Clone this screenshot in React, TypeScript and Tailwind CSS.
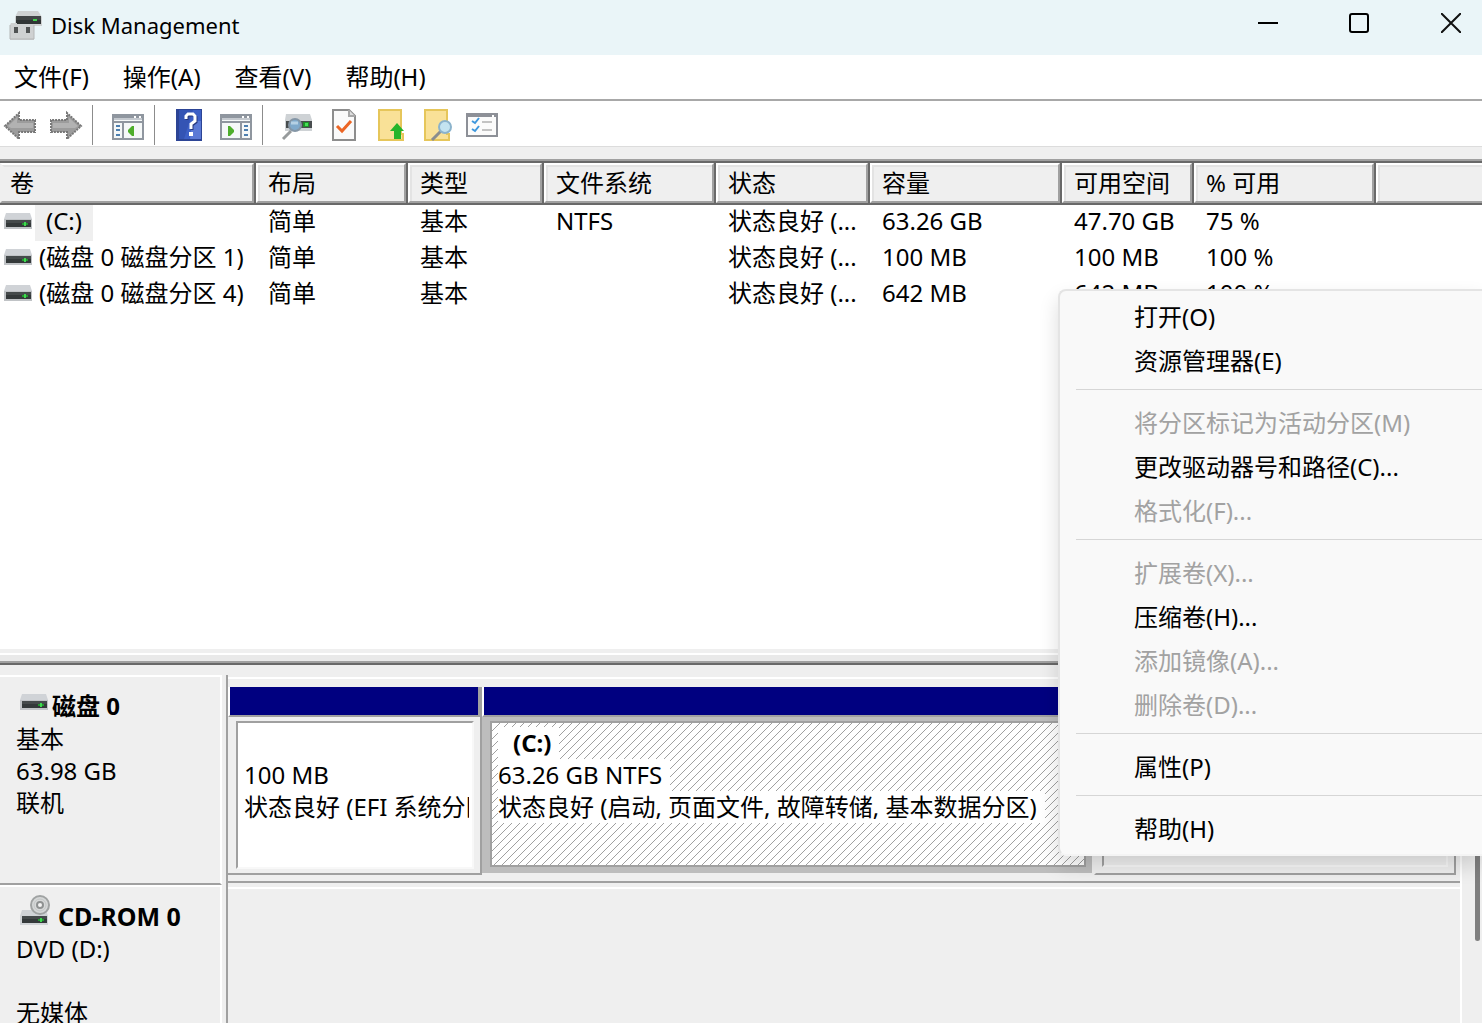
import React from "react";

const FONT = "font-['Noto_Sans','Noto_Sans_CJK_SC',sans-serif]";

function DriveIcon({ className = "" }: { className?: string }) {
  return (
    <svg className={className} width="28" height="16" viewBox="0 0 28 16" aria-hidden="true">
      <path d="M2 0h24l2 6v10H0V6z" fill="#d0d3d7" />
      <path d="M0 6h28v10H0z" fill="#c0c3c6" />
      <rect x="2" y="7" width="25" height="7" fill="#454a4b" />
      <rect x="2" y="10" width="25" height="4" fill="#34393a" />
      <rect x="18" y="10" width="6" height="2" fill="#239a30" />
      <rect x="20" y="9" width="2" height="4" fill="#3fd94f" />
    </svg>
  );
}

function CdIcon() {
  return (
    <svg width="30" height="32" viewBox="0 0 30 32" aria-hidden="true">
      <path d="M2 15h24l2 6v9H0v-9z" fill="#d0d3d6" />
      <circle cx="20" cy="10" r="9" fill="#d6d8d8" stroke="#a0a3a3" strokeWidth="2" />
      <circle cx="20" cy="10" r="6" fill="none" stroke="#c4c7c7" />
      <circle cx="20" cy="10" r="3" fill="#f4f4f4" stroke="#8f9292" strokeWidth="2" />
      <rect x="2" y="21" width="25" height="7" fill="#454a4b" />
      <rect x="2" y="24" width="25" height="4" fill="#34393a" />
      <rect x="18" y="24" width="6" height="2" fill="#239a30" />
      <rect x="20" y="23" width="2" height="4" fill="#3fd94f" />
    </svg>
  );
}

function AppIcon() {
  return (
    <svg width="34" height="32" viewBox="0 0 34 32" aria-hidden="true">
      <path d="M10 2h20l4 6v9H7V8z" fill="#cfd2d3" />
      <rect x="8" y="7" width="25" height="8" fill="#414546" />
      <rect x="8" y="11" width="25" height="4" fill="#303435" />
      <rect x="25" y="10" width="4" height="2" fill="#3fd04c" />
      <path d="M3 14h6v2h17v15H2V16z" fill="#cfd1d2" />
      <path d="M2 16v14h24V16" fill="none" stroke="#b4b6b7" strokeWidth="1" />
      <rect x="6" y="18" width="4" height="6" fill="#505354" />
      <rect x="18" y="18" width="4" height="6" fill="#505354" />
    </svg>
  );
}

function ArrowIcon({ flip = false }: { flip?: boolean }) {
  return (
    <svg width="34" height="32" viewBox="0 0 34 32" className={flip ? "-scale-x-100" : ""} aria-hidden="true">
      <path d="M2 17 16 4v7h16v12H16v7z" fill="#9c9c9c" />
      <path d="M5 17 14 9v5h16v5H8z" fill="#b2b2b2" />
      <path d="M2 17 16 4v7h16v12H16v7z" fill="none" stroke="#777" strokeWidth="2" strokeDasharray="2 1" />
    </svg>
  );
}

function PaneIcon({ right = false }: { right?: boolean }) {
  return (
    <svg width="32" height="26" viewBox="0 0 32 26" aria-hidden="true">
      <rect x="1" y="1" width="30" height="24" fill="#f5f8f8" stroke="#8f969f" strokeWidth="2" />
      <path d="M2 3h28" stroke="#8f969f" strokeWidth="2" />
      <path d="M2 5h28" stroke="#c4c9cf" strokeWidth="2" />
      <path d="M2 8h28" stroke="#8f969f" strokeWidth="2" />
      <path d="M22 3h2M27 3h2" stroke="#fff" strokeWidth="2" />
      {right ? (
        <g>
          <path d="M21 8v17" stroke="#8f969f" strokeWidth="2" />
          <path d="M24 12h4M24 16h4M24 21h4" stroke="#4c7fb0" strokeWidth="2" />
          <path d="M8 12v10h2l4-4v-2l-4-4z" fill="#4eae2c" />
        </g>
      ) : (
        <g>
          <path d="M11 8v17" stroke="#8f969f" strokeWidth="2" />
          <path d="M4 12h4M4 16h4M4 21h4" stroke="#4c7fb0" strokeWidth="2" />
          <path d="M22 12v10h-2l-4-4v-2l4-4z" fill="#4eae2c" />
        </g>
      )}
    </svg>
  );
}

function HelpIcon() {
  return (
    <svg width="26" height="32" viewBox="0 0 26 32" aria-hidden="true">
      <rect width="26" height="32" fill="#2c4495" />
      <rect x="3" y="1" width="22" height="29" fill="#3d60c6" />
      <path d="M3 1h14L8 30H3z" fill="#3454b4" />
      <path d="M16 12h9v18H14z" fill="#6f8be0" opacity=".6" />
      <path d="M11 11V8l2-2h5l2 2v5l-4 3v5" fill="none" stroke="#26377c" strokeWidth="3" />
      <path d="M10 10V7l2-2h5l2 2v5l-4 3v5" fill="none" stroke="#fff" strokeWidth="3" />
      <rect x="13" y="23" width="4" height="4" fill="#fff" />
    </svg>
  );
}

function DriveSearchIcon() {
  return (
    <svg width="32" height="28" viewBox="0 0 32 28" aria-hidden="true">
      <path d="M5 1h24l2 6v11H4V7z" fill="#ced2d5" />
      <rect x="5" y="8" width="26" height="7" fill="#484d4e" />
      <rect x="22" y="9" width="6" height="5" fill="#1f8f2a" />
      <rect x="24" y="10" width="3" height="3" fill="#44e055" />
      <path d="M10 18 2 26" stroke="#979b9c" strokeWidth="3" />
      <circle cx="14" cy="12" r="6" fill="#7fa9cb" stroke="#8496a6" strokeWidth="2" />
      <path d="M10 10h7" stroke="#b5d0e4" strokeWidth="3" />
    </svg>
  );
}

function CheckPageIcon() {
  return (
    <svg width="24" height="32" viewBox="0 0 24 32" aria-hidden="true">
      <path d="M1 1h16l6 6v24H1z" fill="#fafafa" stroke="#8d8d8d" strokeWidth="2" />
      <path d="M17 1v6h6" fill="#ddd" stroke="#a8a8a8" strokeWidth="2" />
      <path d="m5 17 5 5 9-10" fill="none" stroke="#ec6524" strokeWidth="3" />
    </svg>
  );
}

function FolderUpIcon() {
  return (
    <svg width="28" height="32" viewBox="0 0 28 32" aria-hidden="true">
      <path d="M1 1h22v24h2v6H1z" fill="#f9e197" stroke="#e6c65a" strokeWidth="2" />
      <path d="M19 14 26 22h-3v8h-7v-8h-4z" fill="#26b52a" />
    </svg>
  );
}

function FolderSearchIcon() {
  return (
    <svg width="30" height="32" viewBox="0 0 30 32" aria-hidden="true">
      <path d="M1 1h22v24h2v6H1z" fill="#f9e197" stroke="#e6c65a" strokeWidth="2" />
      <path d="M17 22 8 31" stroke="#8a8d8e" strokeWidth="3" />
      <circle cx="21" cy="18" r="6" fill="#c3e3f0" stroke="#8bb3cc" strokeWidth="2" />
    </svg>
  );
}

function ListIcon() {
  return (
    <svg width="32" height="24" viewBox="0 0 32 24" aria-hidden="true">
      <rect x="1" y="1" width="30" height="22" fill="#fbfbfb" stroke="#8d9097" strokeWidth="2" />
      <path d="M2 3h28" stroke="#8d9097" strokeWidth="2" />
      <path d="M26 3h2" stroke="#fff" strokeWidth="2" />
      <path d="m6 8 3 2 4-5M6 16l3 2 4-5" fill="none" stroke="#3d97dd" strokeWidth="2" />
      <path d="M16 9h10M16 17h10" stroke="#c3c3c3" strokeWidth="2" />
    </svg>
  );
}

function ToolButton({ label, className, children }: { label: string; className: string; children: React.ReactNode }) {
  return (
    <button type="button" aria-label={label} className={`flex shrink-0 items-center justify-center ${className}`}>
      {children}
    </button>
  );
}

function Separator({ className }: { className: string }) {
  return <div className={`h-10 w-px shrink-0 bg-[#8c8c8c] ${className}`} />;
}

const columns = [
  { label: "卷", width: "w-[256px]", pad: "pl-[6px]" },
  { label: "布局", width: "w-[152px]", pad: "pl-2" },
  { label: "类型", width: "w-[136px]", pad: "pl-2" },
  { label: "文件系统", width: "w-[172px]", pad: "pl-2" },
  { label: "状态", width: "w-[154px]", pad: "pl-2" },
  { label: "容量", width: "w-[192px]", pad: "pl-2" },
  { label: "可用空间", width: "w-[132px]", pad: "pl-2" },
  { label: "% 可用", width: "w-[182px]", pad: "pl-2" },
  { label: "", width: "", pad: "pl-2" },
];

const volumes = [
  { name: "(C:)", selected: true, cells: ["简单", "基本", "NTFS", "状态良好 (...", "63.26 GB", "47.70 GB", "75 %"] },
  { name: "(磁盘 0 磁盘分区 1)", selected: false, cells: ["简单", "基本", "", "状态良好 (...", "100 MB", "100 MB", "100 %"] },
  { name: "(磁盘 0 磁盘分区 4)", selected: false, cells: ["简单", "基本", "", "状态良好 (...", "642 MB", "642 MB", "100 %"] },
];

function VolumeTable() {
  return (
    <table className="w-full table-fixed border-collapse">
      <thead>
        <tr>
          {columns.map((c, i) => {
            const last = i === columns.length - 1;
            return (
              <th key={i} scope="col" className={`p-0 text-left font-normal ${c.width}`}>
                <div className={`h-[42px] border-b-2 border-[#696969] ${last ? "" : "border-r-2"}`}>
                  <div
                    className={`h-10 border-t-2 border-b-2 border-l-2 border-t-white border-r-[#a0a0a0] border-b-[#a0a0a0] bg-[#efefef] ${
                      last ? "" : "border-r-2"
                    } ${i === 0 ? "border-l-[#efefef]" : "border-l-white"}`}
                  >
                    <div className={`h-9 border-t-2 border-l-2 border-t-[#e3e3e3] leading-8 whitespace-nowrap ${c.pad} ${i === 0 ? "border-l-[#efefef]" : "border-l-[#e3e3e3]"}`}>
                      {c.label}
                    </div>
                  </div>
                </div>
              </th>
            );
          })}
        </tr>
      </thead>
      <tbody>
        {volumes.map((v) => (
          <tr key={v.name} className="h-9 align-top">
            <td className="p-0">
              <div className="flex h-9 items-start">
                <DriveIcon className="mt-2 ml-1 shrink-0" />
                <span className={v.selected ? "ml-[3px] h-9 bg-[#efefef] px-[11px] leading-8" : "ml-[7px] leading-8 whitespace-nowrap"}>{v.name}</span>
              </div>
            </td>
            {v.cells.map((text, i) => (
              <td key={i} className="p-0 pl-3 leading-8 whitespace-nowrap">
                {text}
              </td>
            ))}
            <td />
          </tr>
        ))}
      </tbody>
    </table>
  );
}

type Entry = { label: string; disabled?: boolean };

const menuGroups: Entry[][] = [
  [{ label: "打开(O)" }, { label: "资源管理器(E)" }],
  [{ label: "将分区标记为活动分区(M)", disabled: true }, { label: "更改驱动器号和路径(C)..." }, { label: "格式化(F)...", disabled: true }],
  [
    { label: "扩展卷(X)...", disabled: true },
    { label: "压缩卷(H)..." },
    { label: "添加镜像(A)...", disabled: true },
    { label: "删除卷(D)...", disabled: true },
  ],
  [{ label: "属性(P)" }],
  [{ label: "帮助(H)" }],
];

function ContextMenu() {
  return (
    <div
      role="menu"
      className="absolute top-[289px] right-0 left-[1058px] rounded-l-lg border-2 border-r-0 border-[#e4e4e4] border-b-[#f4f4f4] bg-[#f9f9f9] pt-1 shadow-[0_10px_20px_rgba(0,0,0,0.14)]"
    >
      {menuGroups.map((group, i) => (
        <div key={i} className={`ml-4 pb-[6px] last:pb-[3px] ${i > 0 ? "border-t border-[#d6d6d6] pt-[11px]" : ""}`}>
          {group.map((e) => (
            <button
              key={e.label}
              type="button"
              role="menuitem"
              disabled={e.disabled}
              className="block h-11 w-full pl-[58px] text-left leading-10 whitespace-nowrap text-black disabled:text-[#a2a2a2]"
            >
              {e.label}
            </button>
          ))}
        </div>
      ))}
    </div>
  );
}

function DiskMap() {
  return (
    <section className="flex min-h-0 flex-1 bg-[#efefef]">
      <div className="min-w-0 flex-1">
        <div className="flex h-[210px]">
          <div className="w-[222px] shrink-0 border-t-2 border-r-2 border-b-2 border-white border-b-[#a0a0a0] pt-3 pl-4">
            <h2 className="flex leading-8 font-bold">
              <DriveIcon className="mt-[5px] ml-1 shrink-0" />
              <span className="ml-1 pt-[2px] leading-[30px]">磁盘 0</span>
            </h2>
            <div className="pt-[2px] leading-8">
              <p>基本</p>
              <p>63.98 GB</p>
              <p>联机</p>
            </div>
          </div>
          <div className="ml-1 min-w-0 flex-1 border-l-2 border-[#a0a0a0] pt-[2px]">
            <div className="flex h-[206px] border-t-2 border-b-2 border-t-white border-b-[#a0a0a0] pt-2">
              <div className="w-[254px] shrink-0">
                <div className="h-[30px] border-r-4 border-b-2 border-l-2 border-[#a0a0a0] border-l-white bg-[#000080]" />
                <div className="h-[158px] border-r-2 border-b-2 border-[#a0a0a0] pt-1 pr-[6px] pl-2">
                  <div className="h-[148px] overflow-hidden border-2 border-[#a0a0a0] border-r-[#f8f8f8] border-b-[#f8f8f8] bg-white pt-9 pl-[6px] leading-8 whitespace-nowrap">
                    <p>100 MB</p>
                    <p className="mr-[3px] overflow-hidden">状态良好 (EFI 系统分区)</p>
                  </div>
                </div>
              </div>
              <div className="w-[610px] shrink-0">
                <div className="h-[30px] border-r-4 border-b-2 border-l-2 border-[#a0a0a0] border-l-white bg-[#000080]" />
                <div className="h-[156px] bg-[#bdbdbd] pt-1 pr-[6px] pl-2">
                  <div className="h-[146px] border-2 border-[#a0a0a0] bg-[linear-gradient(135deg,#a0a0a0_0%,#fff_5%,#fff_45%,#a0a0a0_50%,#fff_55%,#fff_95%,#a0a0a0_100%)] bg-size-[8px_8px] pt-1 pl-[6px] leading-8 whitespace-nowrap">
                    <p className="font-bold">
                      <span className="inline-block bg-white pr-2 pl-[15px]">(C:)</span>
                    </p>
                    <p>
                      <span className="inline-block bg-white pr-2">63.26 GB NTFS</span>
                    </p>
                    <p>
                      <span className="inline-block bg-white pr-2">状态良好 (启动, 页面文件, 故障转储, 基本数据分区)</span>
                    </p>
                  </div>
                </div>
              </div>
              <div className="mr-1 ml-[2px] min-w-0 flex-1">
                <div className="h-[30px] border-b-2 border-[#a0a0a0] bg-[#000080]" />
                <div className="h-[158px] border-r-2 border-b-2 border-l-2 border-[#a0a0a0] border-l-[#efefef] p-[6px]">
                  <div className="h-[144px] border-2 border-[#a0a0a0] border-r-[#f8f8f8] border-b-[#f8f8f8] bg-[#efefef]" />
                </div>
              </div>
            </div>
          </div>
        </div>
        <div className="flex h-[138px]">
          <div className="w-[222px] shrink-0 border-t-2 border-r-2 border-white pt-[6px] pl-4">
            <h2 className="flex h-10 leading-10 font-bold">
              <span className="mt-[2px] ml-1">
                <CdIcon />
              </span>
              <span className="mt-[3px] ml-2 text-[25px]">CD-ROM 0</span>
            </h2>
            <p className="leading-8">DVD (D:)</p>
            <p className="mt-8 leading-8">无媒体</p>
          </div>
          <div className="ml-1 flex-1 border-l-2 border-[#a0a0a0] pt-[2px]">
            <div className="h-full border-t-2 border-white" />
          </div>
        </div>
      </div>
      <div className="flex w-[22px] shrink-0 justify-end border-l-2 border-white pr-[2px]">
        <div className="h-[266px] w-[5px] rounded-full bg-[#7f7f7f]" />
      </div>
    </section>
  );
}

export default function App() {
  return (
    <main className={`relative flex h-screen flex-col overflow-hidden bg-[#efefef] text-2xl text-black ${FONT}`}>
      <header className="flex h-[55px] shrink-0 items-start bg-[#eaf5f8] pt-[9px] pl-2">
        <AppIcon />
        <h1 className="ml-[9px] flex-1 text-[22px] leading-8">Disk Management</h1>
        <button type="button" aria-label="Minimize" className="flex h-7 w-[91px] items-center justify-center">
          <svg width="20" height="20" viewBox="0 0 20 20">
            <path d="M0 10h20" stroke="#000" strokeWidth="2" />
          </svg>
        </button>
        <button type="button" aria-label="Maximize" className="flex h-7 w-[91px] items-center justify-center">
          <svg width="20" height="20" viewBox="0 0 20 20">
            <rect x="1" y="1" width="18" height="18" rx="2" fill="none" stroke="#000" strokeWidth="2" />
          </svg>
        </button>
        <button type="button" aria-label="Close" className="flex h-7 w-[78px] items-center justify-end pr-[21px]">
          <svg width="20" height="20" viewBox="0 0 20 20">
            <path d="m0 0 20 20M20 0 0 20" stroke="#111" strokeWidth="2" />
          </svg>
        </button>
      </header>
      <nav className="flex h-[46px] shrink-0 items-center gap-[34px] border-b-2 border-[#a8a8a8] bg-white pl-[14px]">
        {["文件(F)", "操作(A)", "查看(V)", "帮助(H)"].map((m) => (
          <button key={m} type="button" className="leading-8">
            {m}
          </button>
        ))}
      </nav>
      <div className="flex h-[46px] shrink-0 items-center border-b border-[#dcdcdc] bg-white pt-[2px] pl-[3px]">
        <ToolButton label="Back" className="w-[34px]"><ArrowIcon /></ToolButton>
        <ToolButton label="Forward" className="ml-3 w-[34px]"><ArrowIcon flip /></ToolButton>
        <Separator className="ml-[9px]" />
        <ToolButton label="Show console tree" className="mt-1 ml-[19px] w-8"><PaneIcon /></ToolButton>
        <Separator className="ml-[10px]" />
        <ToolButton label="Help" className="ml-[21px] w-[26px]"><HelpIcon /></ToolButton>
        <ToolButton label="Show action pane" className="mt-1 ml-[18px] w-8"><PaneIcon right /></ToolButton>
        <Separator className="ml-[10px]" />
        <ToolButton label="Rescan disks" className="mt-1 ml-[18px] w-8"><DriveSearchIcon /></ToolButton>
        <ToolButton label="Properties" className="ml-[19px] w-6"><CheckPageIcon /></ToolButton>
        <ToolButton label="Up" className="ml-[22px] w-7"><FolderUpIcon /></ToolButton>
        <ToolButton label="Search" className="ml-[18px] w-[30px]"><FolderSearchIcon /></ToolButton>
        <ToolButton label="Settings" className="ml-[12px] w-8"><ListIcon /></ToolButton>
      </div>
      <section className="mt-3 h-[490px] shrink-0 overflow-hidden border-t-2 border-[#a0a0a0] bg-white">
        <div className="border-t-2 border-[#696969]">
          <VolumeTable />
        </div>
      </section>
      <div className="h-4 shrink-0 border-b-2 border-[#696969] bg-[#efefef] pt-1">
        <div className="h-[10px] border-t-2 border-b-2 border-white border-b-[#a0a0a0] bg-[#e9e9e9]" />
      </div>
      <div className="h-[10px] shrink-0" />
      <DiskMap />
      <ContextMenu />
    </main>
  );
}
